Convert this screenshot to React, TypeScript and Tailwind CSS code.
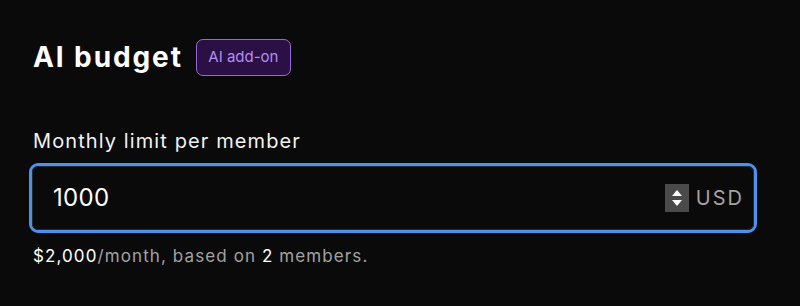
import React from 'react';

const App = () => {
    return (
        <div className="w-[800px] h-[306px] bg-[#0a0a0a] text-white px-[29px] pt-[39px]" style={{ fontFamily: 'Inter, "Noto Sans", sans-serif' }}>
            {/* Title */}
            <div className="flex items-center gap-[13px] pl-[4px] h-[37px]">
                <h1 className="text-[28px] leading-[37px] font-bold tracking-[1.9px]">AI budget</h1>
                <span className="h-[37px] w-[95px] justify-center flex items-center rounded-[7px] border border-[#9468dc] bg-[#2b1046] text-[#b48df3] text-[15px]">
                    AI add-on
                </span>
            </div>

            {/* Field */}
            <div className="mt-[53px] pl-[4px] text-[20px] leading-[24px] tracking-[1.1px] text-[#f2f2f2]">Monthly limit per member</div>
            <div className="mt-[10px] w-[728px] h-[70px] rounded-[9px] border-[3px] border-[#4c92ec] bg-[#0a0a0a] flex items-center">
                <div className="flex-1 h-full rounded-[6px] border border-[#2a2a2a] flex items-center pl-[20px] pr-[9px]">
                    <span className="flex-1 text-[24px] tracking-[0.3px] text-white">1000</span>
                    <div className="w-[24px] h-[28px] bg-[#4a4a4a] flex flex-col items-center justify-center gap-[4px]">
                        <svg width="10" height="6" viewBox="0 0 10 6"><path d="M5 0 L10 6 L0 6 Z" fill="#fff" /></svg>
                        <svg width="10" height="6" viewBox="0 0 10 6"><path d="M0 0 L10 0 L5 6 Z" fill="#fff" /></svg>
                    </div>
                    <span className="ml-[7px] text-[20px] text-[#a3a3a3] tracking-[2px]">USD</span>
                </div>
            </div>

            {/* Hint */}
            <div className="mt-[12px] pl-[4px] text-[17px] leading-[22px] tracking-[1.1px] text-[#a3a3a3]">
                <span className="text-white">$2,000</span>/month, based on <span className="text-white">2</span> members.
            </div>
        </div>
    );
};

export default App;
